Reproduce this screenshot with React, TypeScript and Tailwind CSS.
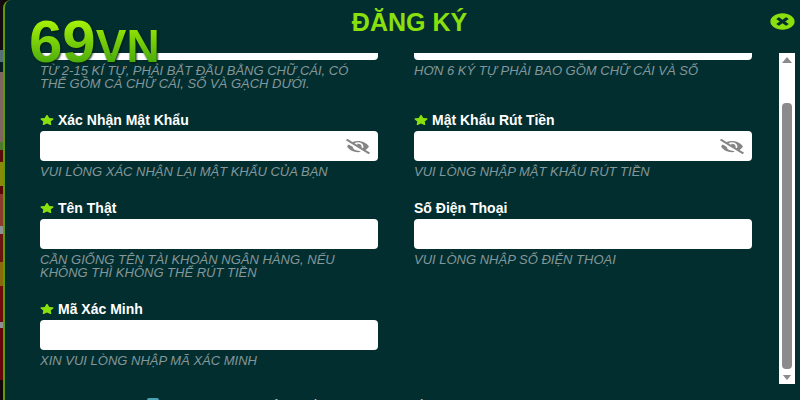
import { FaEyeSlash, FaStar, FaTimesCircle } from 'react-icons/fa';

interface Field {
  id: string;
  label: string;
  hint: string;
  required?: boolean;
  secret?: boolean;
}

const FIELDS: Field[] = [
  { id: 'username', label: 'Tên Đăng Nhập', hint: 'TỪ 2-15 KÍ TỰ, PHẢI BẮT ĐẦU BẰNG CHỮ CÁI, CÓ THỂ GỒM CẢ CHỮ CÁI, SỐ VÀ GẠCH DƯỚI.', required: true },
  { id: 'password', label: 'Mật Khẩu', hint: 'HƠN 6 KÝ TỰ PHẢI BAO GỒM CHỮ CÁI VÀ SỐ', required: true },
  { id: 'confirm', label: 'Xác Nhận Mật Khẩu', hint: 'VUI LÒNG XÁC NHẬN LẠI MẬT KHẨU CỦA BẠN', required: true, secret: true },
  { id: 'withdraw', label: 'Mật Khẩu Rút Tiền', hint: 'VUI LÒNG NHẬP MẬT KHẨU RÚT TIỀN', required: true, secret: true },
  { id: 'realname', label: 'Tên Thật', hint: 'CẦN GIỐNG TÊN TÀI KHOẢN NGÂN HÀNG, NẾU KHÔNG THÌ KHÔNG THỂ RÚT TIỀN', required: true },
  { id: 'phone', label: 'Số Điện Thoại', hint: 'VUI LÒNG NHẬP SỐ ĐIỆN THOẠI' },
  { id: 'captcha', label: 'Mã Xác Minh', hint: 'XIN VUI LÒNG NHẬP MÃ XÁC MINH', required: true },
];

function FormField({ field }: { field: Field }) {
  return (
    <div className="min-w-0">
      <label htmlFor={field.id} className="flex h-[22px] items-center gap-1 text-[14px] font-bold text-white">
        {field.required && <FaStar className="h-[10px] w-[14px] shrink-0 text-[#8ae00d]" preserveAspectRatio="none" />}
        {field.label}
      </label>
      <div className="flex h-[30px] items-center rounded bg-white pr-2">
        <input
          id={field.id}
          type={field.secret ? 'password' : 'text'}
          className="h-full min-w-0 flex-1 bg-transparent px-2 text-xs text-gray-900 outline-none"
        />
        {field.secret && (
          <button type="button" aria-label="Hiện mật khẩu" className="text-[#858585]">
            <FaEyeSlash className="h-[15px] w-6" preserveAspectRatio="none" />
          </button>
        )}
      </div>
      <p className="mt-1 pr-2 text-[13px] leading-[13px] text-[#84979a] italic">{field.hint}</p>
    </div>
  );
}

function Logo() {
  return (
    <div className="absolute top-3 left-6 flex items-baseline leading-none font-bold text-transparent drop-shadow-[1px_1px_1px_#001a10]">
      <span className="bg-linear-to-b from-[#a5f205] from-15% to-[#43a80a] to-90% bg-clip-text text-[60px]">69</span>
      <span className="bg-linear-to-b from-[#8ee005] from-15% to-[#43a80a] to-90% bg-clip-text text-[46px]">VN</span>
    </div>
  );
}

// Sliver of the dimmed page behind the dialog
function Backdrop() {
  return (
    <div className="flex w-[3px] shrink-0 flex-col bg-[#12060a]">
      <div className="h-[50px] bg-[#150a12]" />
      <div className="h-3 bg-[#56707a]" />
      <div className="h-2.5 bg-[#071a26]" />
      <div className="h-[70px] bg-[#806462]" />
      <div className="h-2 bg-[#4c7a2c]" />
      <div className="h-3 bg-[#5c0a0c]" />
      <div className="h-6 bg-[#8a8a0a]" />
      <div className="h-2 bg-[#5c0508]" />
      <div className="h-8 bg-[#8c3a2e]" />
      <div className="h-2 bg-[#8f8f98]" />
      <div className="h-7 bg-[#6c1410]" />
      <div className="h-6 bg-[#8a6a0a]" />
      <div className="h-9 bg-[#700a0c]" />
      <div className="h-1.5 bg-[#8f8f98]" />
      <div className="h-[52px] bg-[#66060a]" />
    </div>
  );
}

function Scrollbar() {
  return (
    <div className="flex w-4 shrink-0 flex-col items-center bg-white py-1" aria-hidden="true">
      <svg viewBox="0 0 10 6" className="h-[6px] w-[10px] fill-[#8b8b8b]">
        <path d="M0 6 5 0l5 6z" />
      </svg>
      <div className="mt-10 mb-1.5 w-[10px] flex-1 rounded bg-[#8b8b8b]" />
      <svg viewBox="0 0 10 6" className="h-[5px] w-[10px] fill-[#8b8b8b]">
        <path d="M0 0h10L5 6z" />
      </svg>
    </div>
  );
}

export default function App() {
  return (
    <div className="flex h-screen overflow-hidden bg-[#12060a] font-['Liberation_Sans',Arial,sans-serif]">
      <Backdrop />
      <section className="relative flex min-w-0 flex-1 flex-col overflow-hidden rounded-tl-lg border-l-2 border-[#5f9a0c] bg-[#022e2f]">
        <header className="flex h-[53px] shrink-0 items-start pt-2.5 pr-[5px]">
          <h1 className="flex-1 pl-11 text-center text-[25px] leading-6 font-bold text-[#8ae00d]">ĐĂNG KÝ</h1>
          <button type="button" aria-label="Đóng" className="pt-[3px] text-[#8ae00d]">
            <FaTimesCircle className="h-[17px] w-[25px]" preserveAspectRatio="none" />
          </button>
        </header>

        <form className="flex min-h-0 flex-1 flex-col">
          <div className="flex min-h-0 flex-1 pr-[5px]">
            <div className="min-w-0 flex-1 overflow-hidden pr-[27px] pl-[35px]">
              {/* list is scrolled, the first row is cut by the header */}
              <div className="-mt-[45px] grid grid-cols-2 gap-x-9 gap-y-[19px]">
                {FIELDS.map((field) => (
                  <FormField key={field.id} field={field} />
                ))}
              </div>
            </div>
            <Scrollbar />
          </div>
          <div className="h-4 shrink-0 overflow-hidden pt-3.5 pl-[142px]">
            <label className="flex items-start gap-3 text-[14px] leading-4 font-bold whitespace-nowrap text-white">
              <input type="checkbox" defaultChecked className="size-3 appearance-none rounded-xs bg-[#4aa3b5]" />
              Tôi đã đủ 18 tuổi và đồng ý với các điều khoản
            </label>
          </div>
        </form>

        <Logo />
      </section>
    </div>
  );
}
